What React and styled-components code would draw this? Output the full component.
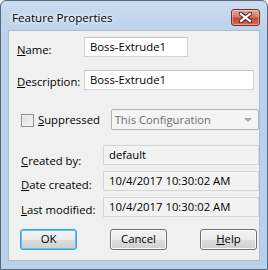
import React from 'react'
import styled, { createGlobalStyle } from 'styled-components'

const Global = createGlobalStyle`
  html, body { margin: 0; padding: 0; background: #ffffff; }
  body { font-family: 'Open Sans', 'Noto Sans', sans-serif; font-size: 11.3px; color: #000; }
`

const Window = styled.div`
  width: 268px;
  height: 270px;
  box-sizing: border-box;
  border: 1px solid #5a6878;
  border-radius: 6px 6px 0 0;
  background: linear-gradient(#c9dbef, #b9d1ea 40px, #b9d1ea);
  display: flex;
  flex-direction: column;
  padding: 0 7px 8px;
`

const TitleBar = styled.div`
  height: 29px;
  display: flex;
  align-items: flex-start;
  justify-content: space-between;
`

const Title = styled.span`
  margin: 9px 0 0 4px;
  font-size: 11.6px;
  line-height: 16px;
  text-shadow: 0 0 6px #ffffff, 0 0 3px #ffffff;
`

const Close = styled.div`
  margin-top: 8px;
  width: 29px;
  height: 17px;
  box-sizing: border-box;
  border: 1px solid #7a2f2a;
  border-radius: 3px;
  background: linear-gradient(#e3a898, #d27a68 45%, #c24a36 55%, #d06a55);
  box-shadow: inset 0 0 0 1px rgba(255, 255, 255, 0.35);
  display: flex;
  align-items: center;
  justify-content: center;
`

const Client = styled.div`
  flex: 1;
  background: #f0f0f0;
  border: 1px solid #aabcd3;
`

const Row = styled.div`
  display: flex;
  align-items: flex-start;
  height: ${(p) => p.$h}px;
  margin-top: ${(p) => p.$top}px;
  padding-left: ${(p) => p.$left || 0}px;
`

const Label = styled.div`
  width: ${(p) => p.$width}px;
  flex: none;
  margin-top: ${(p) => p.$drop || 0}px;
  line-height: 16px;
  white-space: nowrap;
`

const Input = styled.div`
  width: ${(p) => p.$width}px;
  height: 20px;
  box-sizing: border-box;
  background: #ffffff;
  border: 1px solid #d4d4d4;
  border-top-color: #c2c2c2;
  padding: 0 0 0 5px;
  line-height: 18px;
`

const ReadOnly = styled.div`
  width: ${(p) => p.$width}px;
  height: 20px;
  box-sizing: border-box;
  background: #f2f2f2;
  border: 1px solid #d6d6d6;
  padding: 0 0 0 5px;
  line-height: 18px;
`

const Check = styled.div`
  width: 13px;
  height: 13px;
  box-sizing: border-box;
  margin-top: 5px;
  border: 1px solid #8f8f8f;
  background: linear-gradient(135deg, #dcdcdc, #f6f6f6);
  box-shadow: inset 0 0 0 1px #f4f4f4;
`

const CheckLabel = styled.div`
  width: 73px;
  margin-left: 4px;
  margin-top: 3px;
  line-height: 16px;
`

const Select = styled.div`
  width: 149px;
  height: 21px;
  box-sizing: border-box;
  background: #f4f4f4;
  border: 1px solid #adb2b5;
  border-radius: 2px;
  color: #6d6d6d;
  padding: 0 0 0 3px;
  line-height: 19px;
  display: flex;
  justify-content: space-between;
  align-items: center;
`

const Arrow = styled.span`
  width: 0;
  height: 0;
  margin-right: 6px;
  border-left: 4px solid transparent;
  border-right: 4px solid transparent;
  border-top: 4px solid #a8a8a8;
`

const Buttons = styled.div`
  display: flex;
  gap: 33px;
  margin-top: 12px;
  padding-left: 11px;
`

const Button = styled.div`
  width: 57px;
  height: 21px;
  box-sizing: border-box;
  border: 1px solid ${(p) => (p.$focus ? '#3c9fd8' : '#707070')};
  border-radius: 3px;
  background: linear-gradient(#f2f2f2, #ebebeb 50%, #dddddd 51%, #cfcfcf);
  box-shadow: ${(p) =>
    p.$focus ? 'inset 0 0 0 1px #5fc4ef' : 'inset 0 0 0 1px #fbfbfb'};
  text-align: center;
  line-height: 18px;
`

export default function App() {
  return (
    <>
      <Global />
      <Window>
        <TitleBar>
          <Title>Feature Properties</Title>
          <Close>
            <svg width="13" height="11" viewBox="0 0 13 11">
              <path
                d="M1.5 1.5 L11.5 9.5 M11.5 1.5 L1.5 9.5"
                stroke="#5a2a24"
                strokeWidth="4.2"
                strokeLinecap="square"
              />
              <path
                d="M2 2 L11 9 M11 2 L2 9"
                stroke="#ffffff"
                strokeWidth="2.2"
                strokeLinecap="square"
              />
            </svg>
          </Close>
        </TitleBar>
        <Client>
          <Row $h={20} $top={6} $left={8}>
            <Label $width={67} $drop={5}>
              <u>N</u>ame:
            </Label>
            <Input $width={104}>Boss-Extrude1</Input>
          </Row>
          <Row $h={20} $top={13} $left={8}>
            <Label $width={67} $drop={4}>
              <u>D</u>escription:
            </Label>
            <Input $width={170}>Boss-Extrude1</Input>
          </Row>
          <Row $h={21} $top={19} $left={12}>
            <Check />
            <CheckLabel>
              <u>S</u>uppressed
            </CheckLabel>
            <Select>
              This Configuration
              <Arrow />
            </Select>
          </Row>
          <Row $h={20} $top={15} $left={12}>
            <Label $width={82} $drop={8}>
              <u>C</u>reated by:
            </Label>
            <ReadOnly $width={156}>default</ReadOnly>
          </Row>
          <Row $h={20} $top={6} $left={12}>
            <Label $width={82} $drop={6}>
              <u>D</u>ate created:
            </Label>
            <ReadOnly $width={156}>10/4/2017 10:30:02 AM</ReadOnly>
          </Row>
          <Row $h={20} $top={6} $left={12}>
            <Label $width={82} $drop={5}>
              <u>L</u>ast modified:
            </Label>
            <ReadOnly $width={156}>10/4/2017 10:30:02 AM</ReadOnly>
          </Row>
          <Buttons>
            <Button $focus>OK</Button>
            <Button>Cancel</Button>
            <Button>
              <u>H</u>elp
            </Button>
          </Buttons>
        </Client>
      </Window>
    </>
  )
}
